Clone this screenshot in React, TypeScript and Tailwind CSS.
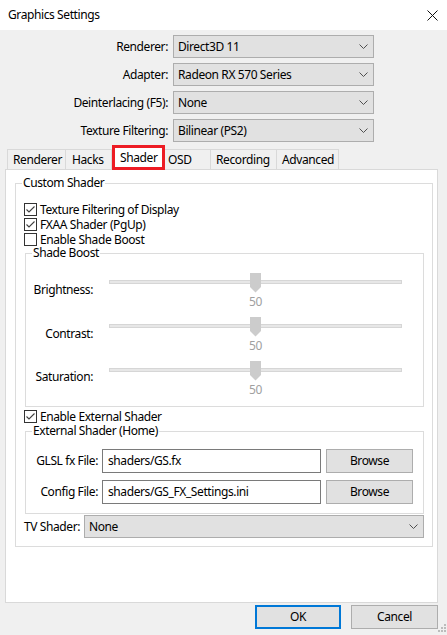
import React from "react";

const FONT = { fontFamily: '"Noto Sans", "Segoe UI", "Liberation Sans", sans-serif' };

function Chevron() {
  return (
    <svg width="9" height="5" viewBox="0 0 9 5" className="shrink-0">
      <path d="M0.5 0.5 L4.5 4.5 L8.5 0.5" fill="none" stroke="#505050" strokeWidth="1" />
    </svg>
  );
}

function Combo({ value, className }: { value: string; className: string }) {
  return (
    <div className={`flex items-center h-[23px] border border-[#adadad] bg-[#e1e1e1] pl-[4px] pr-[5px] ${className}`}>
      <span className="flex-1 leading-[16px] whitespace-nowrap">{value}</span>
      <Chevron />
    </div>
  );
}

function Checkbox({ checked, label }: { checked: boolean; label: string }) {
  return (
    <div className="flex items-center h-[15px] pl-[8px]">
      <div className="w-[13px] h-[13px] border border-[#333333] bg-white flex items-center justify-center shrink-0">
        {checked && (
          <svg width="11" height="11" viewBox="0 0 11 11">
            <path d="M1.5 5.5 L4 8 L9.5 2.5" fill="none" stroke="#404040" strokeWidth="1.1" />
          </svg>
        )}
      </div>
      <span className="ml-[3px] leading-[14px] whitespace-nowrap">{label}</span>
    </div>
  );
}

function Group({ label, className, children }: { label: string; className: string; children: React.ReactNode }) {
  return (
    <div className={`relative border border-[#dcdcdc] ${className}`}>
      <span className="absolute left-[6px] top-[-7px] bg-white px-[1px] leading-[12px] whitespace-nowrap">{label}</span>
      {children}
    </div>
  );
}

function Slider({ label, labelMt }: { label: string; labelMt: string }) {
  return (
    <div className="flex items-start h-[44px]">
      <div className={`w-[67px] text-right leading-[16px] whitespace-nowrap ${labelMt}`}>{label}</div>
      <div className="ml-[16px] w-[293px] flex flex-col">
        <div className="relative h-[20px] w-[293px]">
          <div className="absolute left-0 right-0 top-[7px] h-[4px] border border-[#d6d6d6] bg-[#e7e7e7]" />
          <svg width="11" height="20" viewBox="0 0 11 20" className="absolute left-[141px] top-0">
            <polygon points="0,0 11,0 11,14 5.5,19.5 0,14" fill="#cccccc" />
          </svg>
        </div>
        <div className="mt-[1px] text-center leading-[16px] text-[#a0a0a0]">50</div>
      </div>
    </div>
  );
}

function FileRow({ label, value }: { label: string; value: string }) {
  return (
    <div className="flex items-center h-[24px]">
      <div className="w-[72px] text-right leading-[16px] whitespace-nowrap">{label}</div>
      <div className="ml-[4px] w-[219px] h-[24px] border border-[#7a7a7a] bg-white flex items-center pl-[5px] leading-[16px] whitespace-nowrap">
        {value}
      </div>
      <div className="ml-[5px] w-[87px] h-[24px] border border-[#adadad] bg-[#e1e1e1] flex items-center justify-center leading-[16px]">
        Browse
      </div>
    </div>
  );
}

function Tab({ label, w, pl, first }: { label: string; w: string; pl: string; first?: boolean }) {
  return (
    <div
      className={`h-[20px] ${w} ${pl} border-t border-r border-[#d9d9d9] ${first ? "border-l" : ""} bg-[#f0f0f0] flex items-center leading-[16px] whitespace-nowrap`}
    >
      {label}
    </div>
  );
}

export default function App() {
  const rows: [string, string][] = [
    ["Renderer:", "Direct3D 11"],
    ["Adapter:", "Radeon RX 570 Series"],
    ["Deinterlacing (F5):", "None"],
    ["Texture Filtering:", "Bilinear (PS2)"],
  ];
  return (
    <div className="relative w-[447px] h-[635px] bg-[#f0f0f0] text-[12px] tracking-[-0.4px] text-black overflow-hidden" style={FONT}>
      {/* Title bar */}
      <div className="h-[30px] bg-white flex items-center pl-[8px] pr-[9px]">
        <span className="flex-1 leading-[16px]">Graphics Settings</span>
        <svg width="11" height="11" viewBox="0 0 11 11">
          <path d="M0.5 0.5 L10.5 10.5 M10.5 0.5 L0.5 10.5" stroke="#111" strokeWidth="1" />
        </svg>
      </div>

      {/* Combos */}
      <div className="pt-[5px] flex flex-col gap-[5px]">
        {rows.map(([l, v]) => (
          <div key={l} className="flex items-center h-[23px]">
            <div className="w-[168px] text-right leading-[16px] whitespace-nowrap">{l}</div>
            <Combo value={v} className="ml-[5px] w-[201px]" />
          </div>
        ))}
      </div>

      {/* Tabs */}
      <div className="mt-[3px] pl-[7px] flex items-end relative z-10">
        <Tab label="Renderer" w="w-[59px]" pl="pl-[5px]" first />
        <Tab label="Hacks" w="w-[46px]" pl="pl-[6px]" />
        <div className="h-[25px] mb-[-1px] w-[53px] border-[3px] border-[#ed1c24] bg-white flex items-center pl-[5px] leading-[16px]">
          Shader
        </div>
        <Tab label="OSD" w="w-[46px]" pl="pl-[3px]" />
        <Tab label="Recording" w="w-[66px]" pl="pl-[5px]" />
        <Tab label="Advanced" w="w-[62px]" pl="pl-[5px]" />
      </div>

      {/* Panel */}
      <div className="ml-[5px] w-[433px] h-[434px] border border-[#d9d9d9] bg-white pt-[13px] pl-[9px] pr-[4px]">
        <Group label="Custom Shader" className="pt-[18px] pb-[8px]">
          <Checkbox checked label="Texture Filtering of Display" />
          <Checkbox checked label="FXAA Shader (PgUp)" />
          <Checkbox checked={false} label="Enable Shade Boost" />

          <Group label="Shade Boost" className="mt-[6px] ml-[9px] mr-[8px] pt-[19px] pb-[1px]">
            <Slider label="Brightness:" labelMt="mt-[9px]" />
            <Slider label="Contrast:" labelMt="mt-[9px]" />
            <Slider label="Saturation:" labelMt="mt-[8px]" />
          </Group>

          <div className="mt-[2px]">
            <Checkbox checked label="Enable External Shader" />
          </div>

          <Group label="External Shader (Home)" className="mt-[7px] ml-[9px] mr-[8px] pt-[17px] pb-[9px]">
            <div className="flex flex-col gap-[7px]">
              <FileRow label="GLSL fx File:" value="shaders/GS.fx" />
              <FileRow label="Config File:" value="shaders/GS_FX_Settings.ini" />
            </div>
          </Group>

          <div className="mt-[1px] flex items-center h-[23px]">
            <div className="ml-[8px] w-[60px] leading-[16px] whitespace-nowrap">TV Shader:</div>
            <Combo value="None" className="w-[340px]" />
          </div>
        </Group>
      </div>

      {/* Buttons */}
      <div className="mt-[2px] flex justify-end pr-[9px] gap-[10px]">
        <div className="w-[86px] h-[24px] border-2 border-[#0078d7] bg-[#e1e1e1] flex items-center justify-center leading-[16px]">
          OK
        </div>
        <div className="w-[87px] h-[24px] border border-[#adadad] bg-[#e1e1e1] flex items-center justify-center leading-[16px]">
          Cancel
        </div>
      </div>

      {/* Resize grip */}
      <svg width="12" height="12" viewBox="0 0 12 12" className="absolute right-0 bottom-0">
        <rect x="9" y="1" width="2" height="2" fill="#bcbcbc" />
        <rect x="6" y="4" width="2" height="2" fill="#bcbcbc" />
        <rect x="9" y="4" width="2" height="2" fill="#bcbcbc" />
        <rect x="3" y="7" width="2" height="2" fill="#bcbcbc" />
        <rect x="6" y="7" width="2" height="2" fill="#bcbcbc" />
        <rect x="9" y="7" width="2" height="2" fill="#bcbcbc" />
      </svg>
    </div>
  );
}
